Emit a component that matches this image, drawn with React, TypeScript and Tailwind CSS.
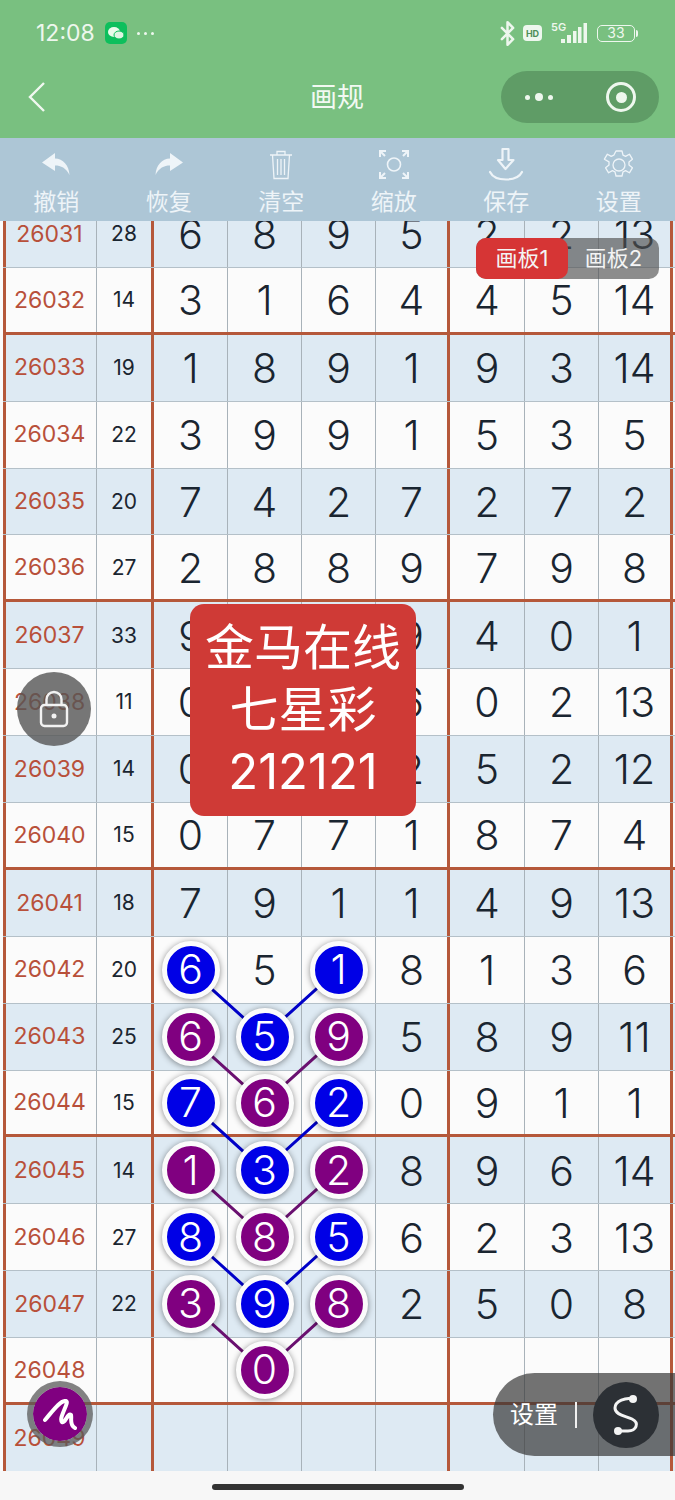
import React from 'react';
import { Bluetooth } from 'lucide-react';

const cjk = "font-['Inter','Noto_Sans_CJK_SC',sans-serif]";

type Row = { id: string; sum: string; nums: string[] };

const rows: Row[] = [
  { id: '26031', sum: '28', nums: ['6', '8', '9', '5', '2', '2', '13'] },
  { id: '26032', sum: '14', nums: ['3', '1', '6', '4', '4', '5', '14'] },
  { id: '26033', sum: '19', nums: ['1', '8', '9', '1', '9', '3', '14'] },
  { id: '26034', sum: '22', nums: ['3', '9', '9', '1', '5', '3', '5'] },
  { id: '26035', sum: '20', nums: ['7', '4', '2', '7', '2', '7', '2'] },
  { id: '26036', sum: '27', nums: ['2', '8', '8', '9', '7', '9', '8'] },
  { id: '26037', sum: '33', nums: ['9', '', '', '9', '4', '0', '1'] },
  { id: '26038', sum: '11', nums: ['0', '', '', '6', '0', '2', '13'] },
  { id: '26039', sum: '14', nums: ['0', '', '', '2', '5', '2', '12'] },
  { id: '26040', sum: '15', nums: ['0', '7', '7', '1', '8', '7', '4'] },
  { id: '26041', sum: '18', nums: ['7', '9', '1', '1', '4', '9', '13'] },
  { id: '26042', sum: '20', nums: ['6', '5', '1', '8', '1', '3', '6'] },
  { id: '26043', sum: '25', nums: ['6', '5', '9', '5', '8', '9', '11'] },
  { id: '26044', sum: '15', nums: ['7', '6', '2', '0', '9', '1', '1'] },
  { id: '26045', sum: '14', nums: ['1', '3', '2', '8', '9', '6', '14'] },
  { id: '26046', sum: '27', nums: ['8', '8', '5', '6', '2', '3', '13'] },
  { id: '26047', sum: '22', nums: ['3', '9', '8', '2', '5', '0', '8'] },
  { id: '26048', sum: '', nums: ['', '0', '', '', '', '', ''] },
  { id: '26049', sum: '', nums: ['', '', '', '', '', '', ''] },
];

// marked cells: "row id:col index" -> colour
const marks: Record<string, 'blue' | 'purple'> = {
  '26042:0': 'blue', '26042:2': 'blue',
  '26043:0': 'purple', '26043:1': 'blue', '26043:2': 'purple',
  '26044:0': 'blue', '26044:1': 'purple', '26044:2': 'blue',
  '26045:0': 'purple', '26045:1': 'blue', '26045:2': 'purple',
  '26046:0': 'blue', '26046:1': 'purple', '26046:2': 'blue',
  '26047:0': 'purple', '26047:1': 'blue', '26047:2': 'purple',
  '26048:1': 'purple',
};

const rowY = (i: number) => 969.4 + i * 66.9;

const Ball = ({ value, color }: { value: string; color: 'blue' | 'purple' }) => (
  <div
    className={`relative z-20 flex h-[58px] w-[58px] shrink-0 items-center justify-center rounded-full border-[5px] border-[#fbfbfb] text-[41px] font-light text-white shadow-[0_1px_6px_rgba(0,0,0,0.45)] ${
      color === 'blue' ? 'bg-[#0000e6]' : 'bg-[#800080]'
    }`}
  >
    {value}
  </div>
);

const UndoIcon = ({ flip }: { flip?: boolean }) => (
  <svg width="30" height="28" viewBox="0 0 30 28" className={flip ? '-scale-x-100' : ''} fill="#eef4f8">
    <path d="M14 2 1 11.5 14 20v-5.6c6 0 11 2.4 14.5 9.6C28 14 22 7.6 14 7.4z" />
  </svg>
);

const TrashIcon = () => (
  <svg width="28" height="32" viewBox="0 0 28 32" fill="none" stroke="#eef4f8" strokeWidth="1.3">
    <path d="M3 6h22M10 5.5V2.5h8v3M5.5 6l1.5 23.5h14L22.5 6M10.5 10v16M14 10v16M17.5 10v16" />
  </svg>
);

const FocusIcon = () => (
  <svg width="32" height="32" viewBox="0 0 32 32" fill="none" stroke="#eef4f8" strokeWidth="2">
    <circle cx="16" cy="15.5" r="6.5" strokeWidth="1.6" />
    <path d="M2 8V2h6M2 2l5 5M30 8V2h-6M30 2l-5 5M2 23v6h6M2 29l5-5M30 23v6h-6M30 29l-5-5" />
  </svg>
);

const SaveIcon = () => (
  <svg width="36" height="36" viewBox="0 0 36 36" fill="none" stroke="#eef4f8" strokeWidth="2.2" strokeLinecap="round" strokeLinejoin="round">
    <path d="M14.5 2h6v11h5L17.5 22 10 13h4.5zM2 25c3 6 9 7.5 16 7.5S31 31 34 25" />
  </svg>
);

const GearIcon = () => (
  <svg width="32" height="32" viewBox="0 0 32 32" fill="none" stroke="#eef4f8" strokeWidth="1.3" strokeLinejoin="round">
    <path d="M13 1.5h6l1 4.2 2.6 1.2 3.8-2.2 3 5-3.4 2.7v3.2l3.4 2.7-3 5-3.8-2.2-2.6 1.2-1 4.2h-6l-1-4.2-2.6-1.2-3.8 2.2-3-5 3.4-2.7v-3.2L1.4 9.7l3-5 3.8 2.2L10.8 5.7z" transform="translate(0 0.5)" />
    <circle cx="16" cy="16" r="6" />
  </svg>
);

const tools: { label: string; icon: React.ReactNode }[] = [
  { label: '撤销', icon: <UndoIcon /> },
  { label: '恢复', icon: <UndoIcon flip /> },
  { label: '清空', icon: <TrashIcon /> },
  { label: '缩放', icon: <FocusIcon /> },
  { label: '保存', icon: <SaveIcon /> },
  { label: '设置', icon: <GearIcon /> },
];

const StatusBar = () => (
  <div className="flex h-[66px] items-center justify-between pl-[36px] pr-[37px] text-[#eef7ee]">
    <div className="flex items-center gap-[10px]">
      <span className="text-[23px] leading-none">12:08</span>
      <div className="flex h-[22px] w-[22px] items-center justify-center rounded-[5px] bg-[#0dbf5c]">
        <svg width="18" height="15" viewBox="0 0 18 15" fill="#eafbea">
          <ellipse cx="7" cy="6" rx="6" ry="5" />
          <ellipse cx="12" cy="9" rx="5" ry="4" fill="#dff5e2" stroke="#0dbf5c" />
        </svg>
      </div>
      <div className="flex items-center gap-[4px]">
        <i className="h-[3px] w-[3px] rounded-full bg-[#eef7ee]" />
        <i className="h-[3px] w-[3px] rounded-full bg-[#eef7ee]" />
        <i className="h-[3px] w-[3px] rounded-full bg-[#eef7ee]" />
      </div>
    </div>
    <div className="flex items-center">
      <Bluetooth size={27} strokeWidth={2.2} />
      <div className="ml-[2px] flex h-[16px] w-[19px] items-center justify-center rounded-[4px] bg-[#eef7ee] text-[9px] font-bold leading-none text-[#4f8f58]">
        HD
      </div>
      <svg width="40" height="24" viewBox="0 0 40 24" fill="#eef7ee" className="ml-[9px]">
        <text x="0" y="10" fontSize="11" fontWeight="600" fontFamily="Inter">5G</text>
        <rect x="10" y="18" width="4" height="4" />
        <rect x="16" y="14" width="4" height="8" />
        <rect x="22" y="10" width="3.5" height="12" />
        <rect x="27" y="6" width="3.5" height="16" />
        <rect x="32.5" y="2" width="3.5" height="20" />
      </svg>
      <div className="ml-[6px] flex h-[17px] w-[38px] items-center justify-center rounded-[5px] border border-[#eef7ee] text-[14px] leading-none">
        33
      </div>
      <div className="ml-[1px] h-[7px] w-[2px] rounded-r bg-[#eef7ee]" />
    </div>
  </div>
);

const NavBar = () => (
  <div className="flex h-[72px] items-center justify-between pb-[10px] pl-[27px] pr-[16px]">
    <svg width="20" height="32" viewBox="0 0 20 32" fill="none" stroke="#f0f8f0" strokeWidth="2.4">
      <path d="M17 2 3 16l14 14" />
    </svg>
    <span className="ml-[126px] text-[27px] leading-none text-[#f2f9f2]">画规</span>
    <div className="flex h-[52px] w-[158px] items-center justify-between rounded-full bg-[#5f9c66] pl-[24px] pr-[23px]">
      <div className="flex items-center gap-[5px]">
        <i className="h-[5px] w-[5px] rounded-full bg-[#eef7ee]" />
        <i className="h-[8px] w-[8px] rounded-full bg-[#eef7ee]" />
        <i className="h-[5px] w-[5px] rounded-full bg-[#eef7ee]" />
      </div>
      <div className="flex h-[30px] w-[30px] items-center justify-center rounded-full border-[3px] border-[#eef7ee]">
        <i className="h-[11px] w-[11px] rounded-full bg-[#eef7ee]" />
      </div>
    </div>
  </div>
);

const Toolbar = () => (
  <div className="grid h-[83px] grid-cols-6 bg-[#adc6d6]">
    {tools.map((t) => (
      <div key={t.label} className="flex flex-col items-center pt-[8px]">
        <div className="flex h-[38px] items-center justify-center">{t.icon}</div>
        <span className="mt-[2px] text-[23px] leading-[32px] text-[#eef4f8]">{t.label}</span>
      </div>
    ))}
  </div>
);

const BoardRow = ({ row, index }: { row: Row; index: number }) => {
  const thick = (index + 3) % 4 === 0;
  const shaded = index % 2 === 0;
  const rule = thick ? 'border-b-[3px] border-b-[#b5583a]' : 'border-b border-b-[#b4c0c8]';
  return (
    <div
      className={`grid h-[66.9px] grid-cols-[94px_57px_74px_74px_74px_74px_75px_74px_74px] ${rule} ${shaded ? 'bg-[#deeaf3]' : 'bg-[#fbfbfb]'}`}
    >
      <div className="flex items-center justify-center border-l-[3px] border-r border-l-[#b5583a] border-r-[#a8b2b9] pr-[3px] text-[23px] text-[#b8503a]">
        {row.id}
      </div>
      <div className="flex items-center justify-center border-r-[3px] border-r-[#b5583a] text-[21px] text-[#1a2530]">
        {row.sum}
      </div>
      {row.nums.map((n, i) => {
        const mark = marks[`${row.id}:${i}`];
        return (
          <div
            key={i}
            className={`flex items-center justify-center text-[41px] font-light text-[#1a2530] ${
              i === 3 || i === 6 ? 'border-r-[3px] border-r-[#b5583a]' : 'border-r border-r-[#a8b2b9]'
            }`}
          >
            {mark ? <Ball value={n} color={mark} /> : <span className="pt-[2px]">{n}</span>}
          </div>
        );
      })}
    </div>
  );
};

export default function App() {
  const links: { i: number; color: string }[] = [
    { i: 0, color: '#0000c8' },
    { i: 1, color: '#6a1070' },
    { i: 2, color: '#0000c8' },
    { i: 3, color: '#6a1070' },
    { i: 4, color: '#0000c8' },
    { i: 5, color: '#6a1070' },
  ];

  return (
    <div className={`relative h-[1500px] w-[675px] overflow-hidden bg-[#f7f7f7] ${cjk}`}>
      <div className="bg-[#79c080]">
        <StatusBar />
        <NavBar />
      </div>
      <Toolbar />

      <div className="h-[1250px] overflow-hidden bg-[#fbfbfb]">
        <div className="-mt-[20px] ml-[3px]">
          {rows.map((r, i) => (
            <BoardRow key={r.id} row={r} index={i} />
          ))}
        </div>
      </div>

      <div className="flex justify-center pt-[13px]">
        <div className="h-[6px] w-[252px] rounded-full bg-[#333333]" />
      </div>

      {/* links between the balls */}
      <svg className="absolute left-0 top-0 z-10" width="675" height="1500" fill="none" strokeWidth="3">
        {links.map((l) => (
          <polyline key={l.i} points={`190,${rowY(l.i)} 264,${rowY(l.i + 1)} 338,${rowY(l.i)}`} stroke={l.color} />
        ))}
      </svg>

      {/* board tabs */}
      <div className="absolute left-[476px] top-[238px] z-30 flex h-[41px] w-[183px] rounded-[10px] bg-[rgba(80,80,80,0.65)] text-[22px] text-[#f4f4f4]">
        <div className="flex w-[92px] items-center justify-center rounded-[10px] bg-[#d63535]">画板1</div>
        <div className="flex flex-1 items-center justify-center">画板2</div>
      </div>

      {/* title card */}
      <div className="absolute left-[190px] top-[604px] z-30 flex h-[212px] w-[226px] flex-col items-center justify-center rounded-[14px] bg-[#cf3a36] text-[49px] leading-[62px] text-white">
        <span>金马在线</span>
        <span>七星彩</span>
        <span>212121</span>
      </div>

      {/* lock */}
      <div className="absolute left-[17px] top-[672px] z-30 flex h-[74px] w-[74px] items-center justify-center rounded-full bg-[rgba(85,85,85,0.8)]">
        <svg width="30" height="38" viewBox="0 0 30 38" fill="none" stroke="#f2f2f2" strokeWidth="2.4">
          <path d="M7.5 15V9.5a7.5 7.5 0 0 1 15 0V15" />
          <rect x="2" y="15" width="26" height="21" rx="3.5" />
          <circle cx="15" cy="26" r="2.5" fill="#f2f2f2" stroke="none" />
        </svg>
      </div>

      {/* pen button */}
      <div className="absolute left-[27px] top-[1381px] z-30 flex h-[66px] w-[66px] items-center justify-center rounded-full border-[6px] border-[rgba(90,90,90,0.75)] bg-[#800080] bg-clip-padding">
        <svg width="36" height="31" viewBox="0 0 36 31" fill="none" stroke="#fff" strokeWidth="4" strokeLinecap="round" strokeLinejoin="round">
          <path d="M3 21C10 13 18 1 24 2c4 1-8 17-4 21 3 2 6-10 9-7 1 3-2 10 4 13" />
        </svg>
      </div>

      {/* settings pill */}
      <div className="absolute left-[493px] top-[1373px] z-30 flex h-[83px] w-[182px] items-center rounded-l-[42px] bg-[rgba(55,55,55,0.7)] pl-[17px] text-white">
        <span className="text-[24px] leading-none">设置</span>
        <div className="ml-[17px] h-[26px] w-[2px] bg-[#f0f0f0]" />
        <div className="ml-[16px] flex h-[66px] w-[66px] items-center justify-center rounded-full bg-[#2c3035]">
          <svg width="40" height="44" viewBox="0 0 40 44" fill="none" stroke="#f4f4f4" strokeWidth="3">
            <path d="M27 6C20 4 9 8 9 15c0 7 11 8 17 11 8 4 4 12-4 12H12" />
            <circle cx="27" cy="6" r="4" fill="#f4f4f4" stroke="none" />
            <circle cx="12" cy="38" r="4" fill="#f4f4f4" stroke="none" />
          </svg>
        </div>
      </div>
    </div>
  );
}
